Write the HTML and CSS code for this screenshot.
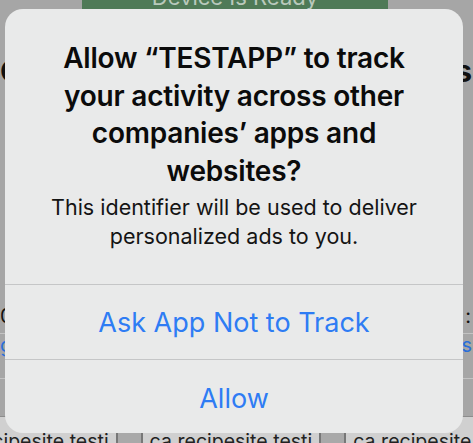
FILE: index.html
```html
<!DOCTYPE html>
<html>
<head>
<meta charset="utf-8">
<link rel="stylesheet" href="styles.css">
</head>
<body>
<div class="page">
  <div class="ready-bar"><span>Device Is Ready</span></div>
  <div class="heading-row"><span>Co</span><span>ts</span></div>
  <div class="label-row"><span>0</span><span>:</span></div>
  <div class="link-row"><span>g</span><span>s</span></div>
  <div class="spacer-row"></div>
  <div class="table-row">
    <span class="cell">ca.recipesite.testi</span>
    <span class="block"></span>
    <span class="cell">ca.recipesite.testi</span>
    <span class="block"></span>
    <span class="cell">ca.recipesite.</span>
  </div>
</div>

<div class="alert">
  <div class="alert-body">
    <h1 class="alert-title">Allow “TESTAPP” to track your activity across other companies’ apps and websites?</h1>
    <p class="alert-message">This identifier will be used to deliver personalized ads to you.</p>
  </div>
  <button class="alert-btn">Ask App Not to Track</button>
  <button class="alert-btn last">Allow</button>
</div>
</body>
</html>
```

FILE: styles.css
```css
html, body {
  margin: 0;
  padding: 0;
}
body {
  width: 473px;
  height: 443px;
  overflow: hidden;
  background: #a6a6a6;
  font-family: Inter, "Noto Sans", sans-serif;
  position: relative;
}
.page {
  display: flex;
  flex-direction: column;
  height: 443px;
}
.ready-bar {
  margin-left: 82px;
  width: 306px;
  height: 9px;
  background: #4f7a57;
  color: #b9c9bc;
  font-size: 22px;
  line-height: 22px;
  text-align: center;
  overflow: hidden;
}
.ready-bar span {
  display: block;
  margin-top: -14px;
}
.heading-row {
  display: flex;
  justify-content: space-between;
  margin-top: 47px;
  font-size: 30px;
  font-weight: 700;
  color: #111;
  height: 30px;
  line-height: 30px;
  padding: 0 1px 0 0;
}
.label-row {
  display: flex;
  justify-content: space-between;
  margin-top: 219px;
  height: 28px;
  line-height: 22px;
  font-size: 20px;
  color: #111;
  padding: 0 2px 0 0;
  border-bottom: 1px solid #c3c3c3;
}
.link-row {
  display: flex;
  justify-content: space-between;
  height: 44px;
  line-height: 22px;
  font-size: 20px;
  color: #2a6fd9;
  padding: 0 1px 0 0;
  border-bottom: 1px solid #c3c3c3;
}
.spacer-row {
  height: 37px;
}
.table-row {
  flex: 1;
  display: flex;
  align-items: flex-end;
  background: #d0d0d0;
  border-top: 1px solid #8c8c8c;
  font-size: 19.5px;
  color: #222;
  line-height: 22px;
  margin-left: -61px;
  white-space: nowrap;
}
.table-row .cell {
  padding: 0 7px;
  margin-bottom: -9px;
}
.table-row .block {
  width: 23px;
  height: 20px;
  background: #a9a9a9;
  border-left: 2px solid #777;
  border-right: 2px solid #777;
  flex-shrink: 0;
}

.alert {
  position: absolute;
  left: 5px;
  top: 9px;
  width: 458px;
  height: 424px;
  background: #e9eaea;
  border-radius: 18px;
  display: flex;
  flex-direction: column;
  overflow: hidden;
}
.alert-body {
  padding: 31px 40px 0;
  height: 275px;
  flex-shrink: 0;
  box-sizing: border-box;
  text-align: center;
}
.alert-title {
  margin: 0;
  font-size: 28px;
  line-height: 37.5px;
  font-weight: 600;
  color: #0b0b0b;
  letter-spacing: -0.2px;
}
.alert-message {
  margin: 3px -20px 0;
  font-size: 21.5px;
  line-height: 29px;
  color: #141414;
  font-weight: 400;
}
.alert-btn {
  border: 0;
  border-top: 1px solid #c5c6c7;
  background: transparent;
  font-family: inherit;
  font-size: 27px;
  color: #2e7cf4;
  height: 75px;
  flex-shrink: 0;
  padding: 0;
  margin: 0;
  text-align: center;
}
.alert-btn.last {
  height: 74px;
  padding-top: 3px;
}
```
